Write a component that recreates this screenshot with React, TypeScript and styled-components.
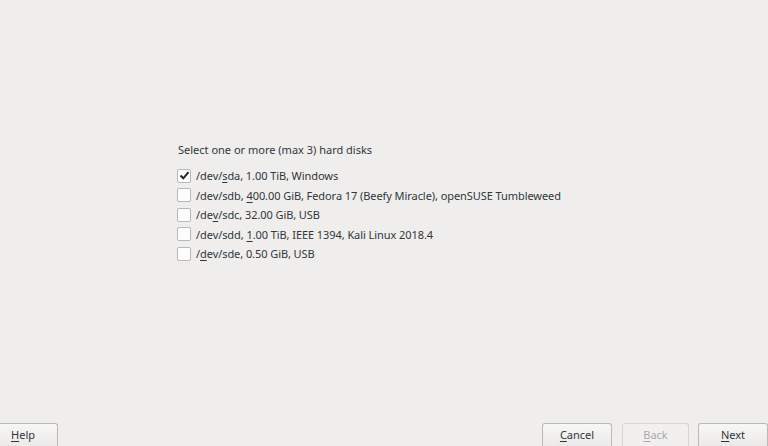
import React from "react";
import styled, { createGlobalStyle } from "styled-components";

const Global = createGlobalStyle`
  html, body { margin: 0; padding: 0; background: #efeeec; }
  body { font-family: "Noto Sans", "DejaVu Sans", sans-serif; font-size: 11px; color: #31363b; }
`;

const Page = styled.div`
  width: 768px;
  height: 446px;
  display: flex;
  flex-direction: column;
  overflow: hidden;
`;

const Content = styled.div`
  flex: 1;
  padding: 142px 0 0 178px;
`;

const Title = styled.div`
  line-height: 16px;
  margin-bottom: 8px;
`;

const List = styled.div`
  display: flex;
  flex-direction: column;
  margin-left: -1px;
`;

const Row = styled.label`
  display: flex;
  align-items: center;
  gap: 5px;
  height: 19.5px;
  letter-spacing: -0.07px;
`;

const Box = styled.span`
  width: 12px;
  height: 12px;
  border: 1px solid #b6b8ba;
  border-radius: 2px;
  background: #fcfcfc;
  display: flex;
  align-items: center;
  justify-content: center;
`;

const U = styled.span`
  text-decoration: underline;
  text-underline-offset: 2px;
`;

const Footer = styled.div`
  display: flex;
  align-items: flex-end;
  height: 23px;
`;

const Spacer = styled.div`
  flex: 1;
`;

const Button = styled.button<{ $w: number; $disabled?: boolean; $ml?: number }>`
  flex-shrink: 0;
  width: ${(p) => p.$w}px;
  height: 23px;
  margin-left: ${(p) => p.$ml ?? 0}px;
  font-family: inherit;
  font-size: 11px;
  color: ${(p) => (p.$disabled ? "#a8aaac" : "#31363b")};
  background: ${(p) => (p.$disabled ? "#f1f0ef" : "linear-gradient(#f7f7f6, #eceae8)")};
  border: 1px solid ${(p) => (p.$disabled ? "#d6d6d5" : "#b9b9b8")};
  border-bottom: none;
  border-radius: 3px 3px 0 0;
  padding: 0 0 2px 0;
  display: flex;
  align-items: center;
  justify-content: center;
`;

const disks: { pre: string; u: string; post: string; checked?: boolean }[] = [
  { pre: "/dev/", u: "s", post: "da, 1.00 TiB, Windows", checked: true },
  { pre: "/dev/sdb, ", u: "4", post: "00.00 GiB, Fedora 17 (Beefy Miracle), openSUSE Tumbleweed" },
  { pre: "/de", u: "v", post: "/sdc, 32.00 GiB, USB" },
  { pre: "/dev/sdd, ", u: "1", post: ".00 TiB, IEEE 1394, Kali Linux 2018.4" },
  { pre: "/", u: "d", post: "ev/sde, 0.50 GiB, USB" },
];

export default function App() {
  return (
    <Page>
      <Global />
      <Content>
        <Title>Select one or more (max 3) hard disks</Title>
        <List>
          {disks.map((d, i) => (
            <Row key={i}>
              <Box>
                {d.checked && (
                  <svg width="11" height="11" viewBox="0 0 11 11">
                    <path d="M1.5 5.5 L4.3 8.3 L9.5 2.2" fill="none" stroke="#232629" strokeWidth="2" />
                  </svg>
                )}
              </Box>
              <span>
                {d.pre}
                <U>{d.u}</U>
                {d.post}
              </span>
            </Row>
          ))}
        </List>
      </Content>
      <Footer>
        <Button $w={70} $ml={-12}>
          <U>H</U>elp
        </Button>
        <Spacer />
        <Button $w={70}>
          <U>C</U>ancel
        </Button>
        <Button $w={67} $ml={10} $disabled>
          <U>B</U>ack
        </Button>
        <Button $w={70} $ml={9}>
          <U>N</U>ext
        </Button>
      </Footer>
    </Page>
  );
}
